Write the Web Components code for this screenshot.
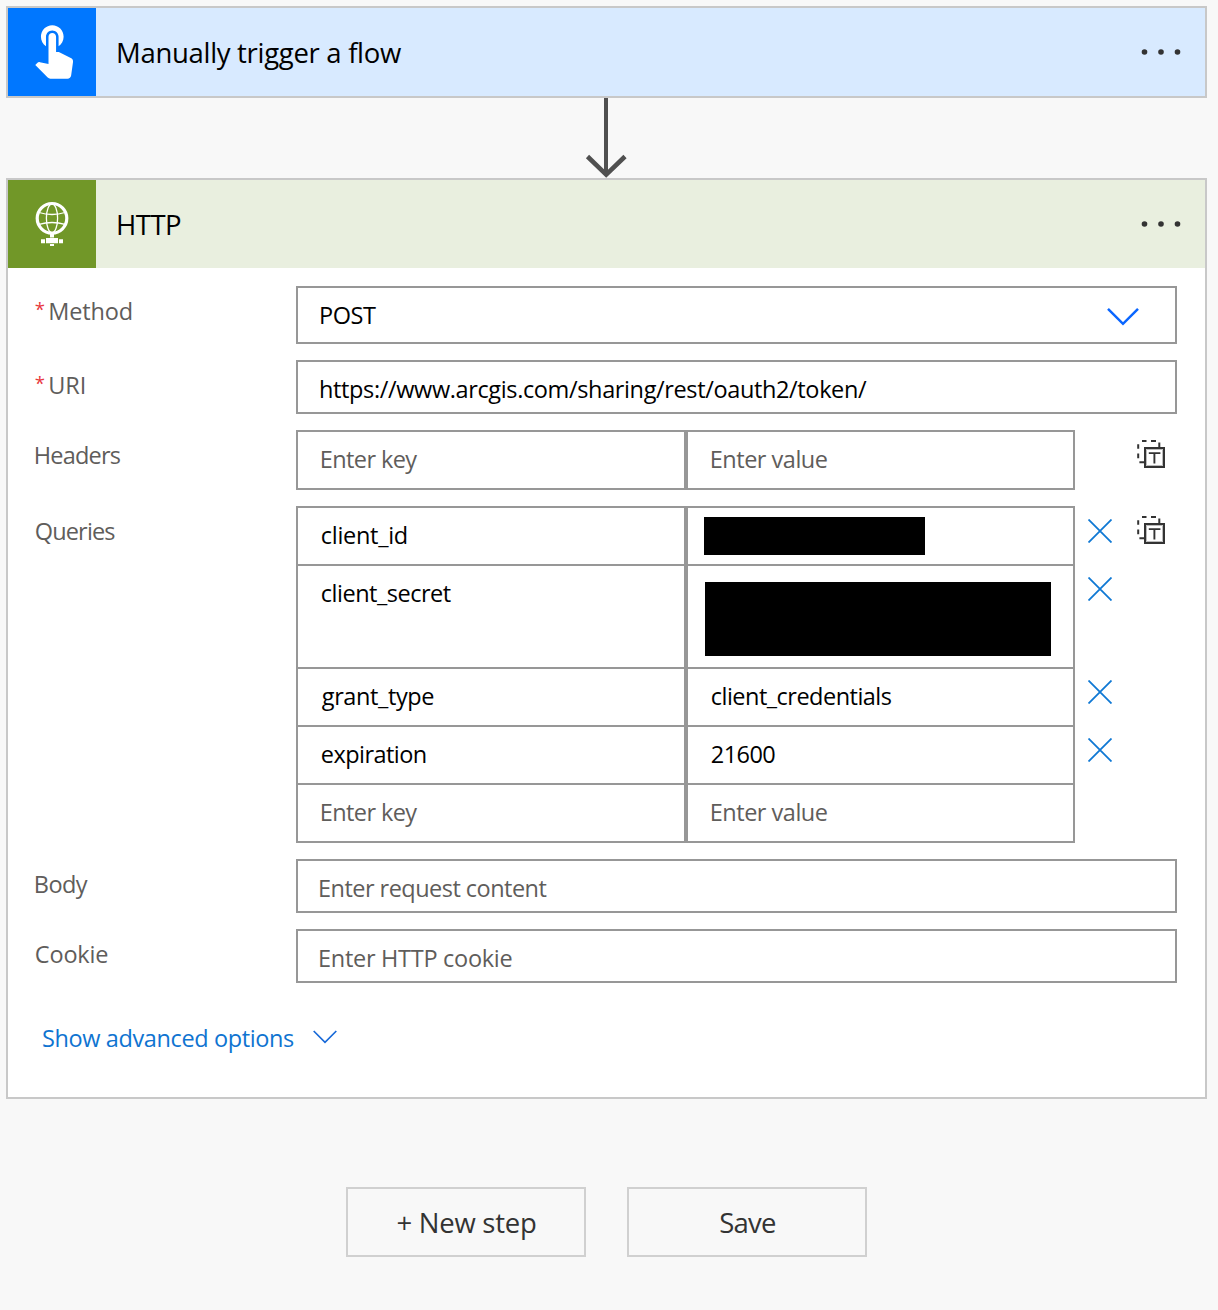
<!DOCTYPE html>
<html lang="en">
<head>
<meta charset="utf-8">
<title>Flow designer</title>
<style>
html, body { margin: 0; background: #f8f8f8; }
body { font-family: "Open Sans", "Noto Sans", sans-serif; color: #000; }
</style>
</head>
<body>
<flow-designer></flow-designer>
<script>
const define = (name, html, ready) => {
  const tpl = document.createElement('template');
  tpl.innerHTML = html;
  customElements.define(name, class extends HTMLElement {
    connectedCallback() {
      if (this.shadowRoot) return;
      this.attachShadow({ mode: 'open' }).append(tpl.content.cloneNode(true));
      if (ready) ready.call(this, this.shadowRoot);
    }
  });
};

const ctx = document.createElement('canvas').getContext('2d');

/* One line of text, tracked so its ink spans the width in "w". */
define('text-run', `<style>:host { display: block; white-space: nowrap; flex: none; }</style><slot></slot>`,
function () {
  const w = parseFloat(this.getAttribute('w'));
  const text = this.textContent;
  const cs = getComputedStyle(this);
  ctx.font = `${cs.fontWeight} ${cs.fontSize} ${cs.fontFamily}`;
  const m = ctx.measureText(text);
  const ink = m.actualBoundingBoxLeft + m.actualBoundingBoxRight;
  const gap = text.length > 1 ? (w - ink) / (text.length - 1) : 0;
  this.style.letterSpacing = gap.toFixed(3) + 'px';
  this.style.marginLeft = m.actualBoundingBoxLeft.toFixed(2) + 'px';
});

define('more-dots', `
<style>:host { display: block; width: 40px; height: 8px; } svg { display: block; }</style>
<svg width="40" height="8" fill="#333"><circle cx="3.5" cy="4" r="2.8"/><circle cx="20" cy="4" r="2.8"/><circle cx="36.5" cy="4" r="2.8"/></svg>`);

define('touch-icon', `
<style>:host, svg { display: block; }</style>
<svg width="88" height="88"><path transform="translate(15.3 9.7) scale(2.52 2.54)" fill="#fff" d="M9 11.24V7.5C9 6.12 10.12 5 11.5 5S14 6.12 14 7.5v3.74c1.21-.81 2-2.18 2-3.74C16 5.01 13.99 3 11.5 3S7 5.01 7 7.5c0 1.56.79 2.93 2 3.74zm9.84 4.63l-4.54-2.26c-.17-.07-.35-.11-.54-.11H13v-6c0-.83-.67-1.5-1.5-1.5S10 6.67 10 7.5v10.74l-3.43-.72c-.08-.01-.15-.03-.24-.03-.31 0-.59.13-.79.33l-.79.8 4.94 4.94c.27.27.65.44 1.06.44h6.79c.75 0 1.33-.55 1.44-1.28l.75-5.27c.01-.07.02-.14.02-.2 0-.62-.38-1.16-.91-1.38z"/></svg>`);

define('globe-icon', `
<style>:host, svg { display: block; }</style>
<svg width="88" height="88" fill="none" stroke="#fff">
<circle cx="44" cy="38.3" r="14.8" stroke-width="3.200"/>
<ellipse cx="44" cy="38.300" rx="5.600" ry="14.500" stroke-width="1.300"/>
<path d="M31 32.500q13 4 26 0M31 44.300q13-3.600 26 0" stroke-width="1.300"/>
<path fill="#fff" stroke="none" d="M42 53h4v4.500h-4zM38 58h12v5.300H38zM33 59.300h4v4h-4zM51 59.300h4v4h-4zM42 64h4v2h-4z"/>
</svg>`);

define('text-mode-icon', `
<style>:host, svg { display: block; }</style>
<svg width="29" height="29" fill="none" stroke="#333" stroke-width="2">
<rect x="8" y="8" width="19" height="19"/>
<path d="M5 1h4.500M14 1h5M1.200 4.200v4.600M1.200 13.600v4.600M2.400 22.200H7M22.300 2.400V7"/>
<path d="M11.800 13.100h11.600M17.400 13v10.400" stroke-width="1.900"/>
<path d="M9.500 25.500V9.500H25.500V25.500Z" stroke="#aaa" stroke-width=".8"/>
</svg>`);

define('close-icon', `
<style>:host, svg { display: block; }</style>
<svg width="24" height="24" stroke="#0f78d4" stroke-width="1.800"><path d="M.5.5l23 23M23.500.5l-23 23"/></svg>`);

define('flow-arrow', `
<style>:host { display: block; width: 44px; height: 80px; } svg { display: block; }</style>
<svg width="44" height="80" fill="none" stroke="#505050"><path d="M22 0v76" stroke-width="4"/><path d="M3.500 58.500L22.200 76.600 41 58.500" stroke-width="4.600"/></svg>`);

define('flow-card', `
<style>
:host { display: block; box-sizing: border-box; width: 1201px; border: 2px solid #c8c8c8; background: #fff; }
header { display: flex; align-items: center; height: 88px; background: var(--tint); padding-right: 24px; }
.tile { width: 88px; height: 88px; background: var(--accent); margin-right: 22px; }
.title { flex: 1; font-size: 27.500px; line-height: 38px; padding-top: 2px; }
</style>
<header><div class="tile"><slot name="icon"></slot></div><div class="title"><slot name="title"></slot></div><more-dots></more-dots></header>
<slot></slot>`);

define('form-row', `
<style>
:host { display: flex; align-items: flex-start; padding-left: 27.800px; }
.label { display: flex; box-sizing: border-box; width: 260.200px; padding-top: 9px; font-size: 23.500px; line-height: 32px; color: #5f5d5b; }
.star { display: none; box-sizing: border-box; width: 14.500px; margin-left: -1px; margin-right: 1px; color: #e8383d; font-size: 18.500px; line-height: 28px; }
:host([required]) .star { display: block; }
</style>
<div class="label"><span class="star"><text-run w="8">*</text-run></span><slot name="label"></slot></div>
<slot></slot>`);

define('text-field', `
<style>
:host { display: flex; justify-content: space-between; box-sizing: border-box; width: 881px; height: 54px; border: 2px solid #979797; padding: 11px 36px 0 23px; background: #fff; font-size: 23.500px; line-height: 32px; }
:host([tall]) { height: 58px; }
:host([hint]) { color: #5f5d5b; padding-left: 22px; }
svg { display: none; margin-top: 8px; }
:host([tall]) svg { display: block; }
</style>
<slot></slot><svg width="32" height="19" fill="none" stroke="#0a66ff" stroke-width="2.500"><path d="M1 1.800l15 15 15-15"/></svg>`);

define('pair-row', `
<style>
:host { display: flex; height: 60px; margin-bottom: -2px; font-size: 23.500px; line-height: 32px; }
:host([tall]) { height: 105px; }
:host([hint]) { color: #5f5d5b; }
.cell { box-sizing: border-box; border: 2px solid #979797; padding: 11px 0 0 23.800px; }
.key { width: 390px; }
.value { width: 389px; }
:host([redacted]) .value { padding: 9px 0 0 16px; }
:host([tall][redacted]) .value { padding: 16px 0 0 17px; }
.tools { display: flex; align-items: flex-start; padding-top: 13px; width: 102px; }
.x { padding-left: 13px; box-sizing: border-box; width: 62px; }
close-icon, text-mode-icon { display: none; }
:host([removable]) close-icon, :host([mode]) text-mode-icon { display: block; }
text-mode-icon { margin-top: -3px; }
</style>
<div class="cell key"><slot name="key"></slot></div><div class="cell value"><slot></slot></div>
<div class="tools"><div class="x"><close-icon></close-icon></div><text-mode-icon></text-mode-icon></div>`);

define('pair-table', `
<style>:host { display: flex; flex-direction: column; padding-bottom: 2px; }</style><slot></slot>`);

define('black-bar', `
<style>:host { display: block; background: #000; width: var(--w); height: var(--h); }</style>`);

define('advanced-toggle', `
<style>
:host { display: flex; align-items: center; gap: 18.500px; padding: 37px 0 0 35px; height: 36px; font-size: 23.500px; line-height: 32px; color: #0f74d1; }
svg { margin-top: -3px; }
.text { width: 251px; }
</style>
<div class="text"><slot></slot></div><svg width="24" height="14" fill="none" stroke="#1769d8" stroke-width="1.700"><path d="M.7 1l11.300 11.300L23.300 1"/></svg>`);

define('flow-button', `
<style>
:host { display: flex; justify-content: center; align-items: center; box-sizing: border-box; width: 240px; height: 70px; border: 2px solid #d0d0d0; font-size: 27.500px; line-height: 38px; color: #333; padding: 2px 0 0 2px; }
</style><slot></slot>`);

define('flow-designer', `
<style>
:host { display: flex; flex-direction: column; align-items: flex-start; box-sizing: border-box; width: 1218px; height: 1310px; padding: 6px 0 0 6px; }
.trigger { height: 92px; --accent: #07f; --tint: #d8eaff; }
flow-arrow { margin-left: 578px; }
.http { height: 921px; --accent: #719728; --tint: #e9efdf; }
.form { display: flex; flex-direction: column; gap: 16px; padding-top: 18px; }
.buttons { display: flex; gap: 41px; padding: 88px 0 0 340px; }
</style>
<flow-card class="trigger"><touch-icon slot="icon"></touch-icon><text-run slot="title" w="283">Manually trigger a flow</text-run></flow-card>
<flow-arrow></flow-arrow>
<flow-card class="http"><globe-icon slot="icon"></globe-icon><text-run slot="title" w="63">HTTP</text-run>
<div class="form">
<form-row required><text-run slot="label" w="81.500">Method</text-run><text-field tall><text-run w="55">POST</text-run></text-field></form-row>
<form-row required><text-run slot="label" w="34.500">URI</text-run><text-field><text-run w="546">https://www.arcgis.com/sharing/rest/oauth2/token/</text-run></text-field></form-row>
<form-row><text-run slot="label" w="85">Headers</text-run><pair-table><pair-row hint mode><text-run slot="key" w="95.500">Enter key</text-run><text-run w="115">Enter value</text-run></pair-row></pair-table></form-row>
<form-row><text-run slot="label" w="79.500">Queries</text-run><pair-table>
<pair-row redacted removable mode><text-run slot="key" w="85">client_id</text-run><black-bar style="--w:221px;--h:38px"></black-bar></pair-row>
<pair-row tall redacted removable><text-run slot="key" w="129">client_secret</text-run><black-bar style="--w:346px;--h:74px"></black-bar></pair-row>
<pair-row removable><text-run slot="key" w="111.500">grant_type</text-run><text-run w="180">client_credentials</text-run></pair-row>
<pair-row removable><text-run slot="key" w="104">expiration</text-run><text-run w="63.500">21600</text-run></pair-row>
<pair-row hint><text-run slot="key" w="95.500">Enter key</text-run><text-run w="115">Enter value</text-run></pair-row>
</pair-table></form-row>
<form-row><text-run slot="label" w="52">Body</text-run><text-field hint><text-run w="226.500">Enter request content</text-run></text-field></form-row>
<form-row><text-run slot="label" w="71.500">Cookie</text-run><text-field hint><text-run w="191.500">Enter HTTP cookie</text-run></text-field></form-row>
</div>
<advanced-toggle><text-run w="251">Show advanced options</text-run></advanced-toggle>
</flow-card>
<div class="buttons"><flow-button><text-run w="138.500">+ New step</text-run></flow-button><flow-button><text-run w="55">Save</text-run></flow-button></div>`);
</script>
</body>
</html>
